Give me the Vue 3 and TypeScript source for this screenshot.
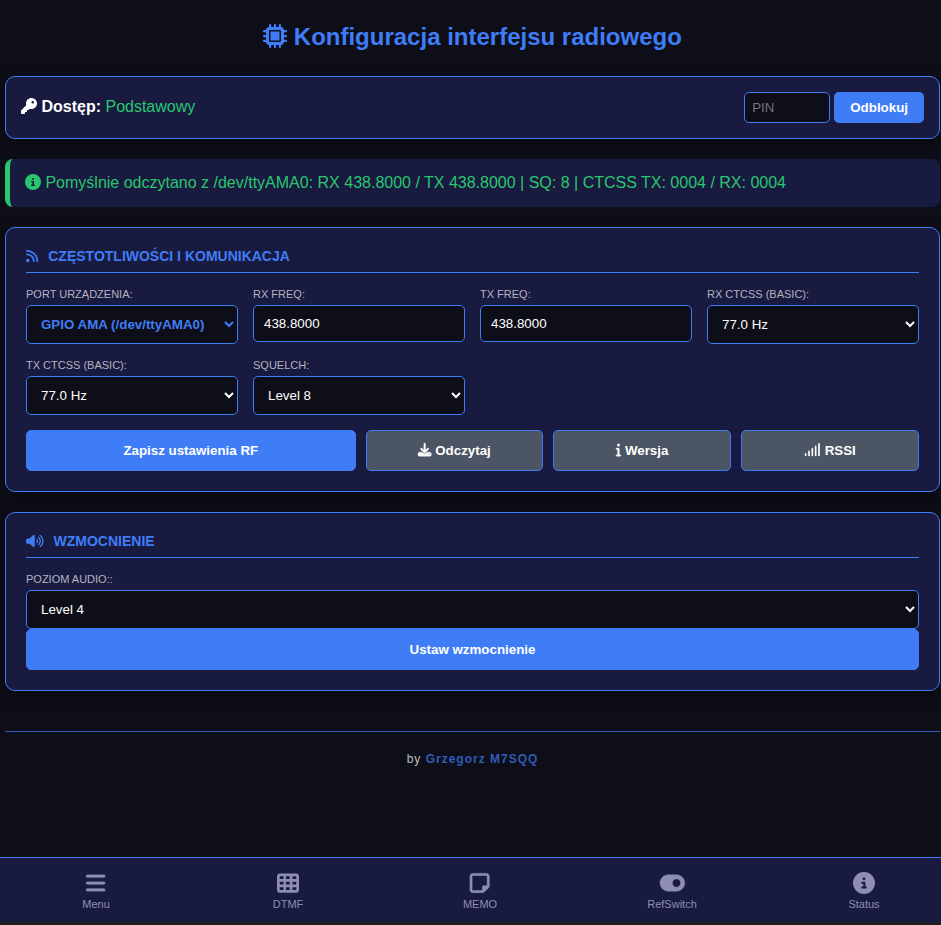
<script setup lang="ts">
import { ref } from 'vue'

type IconName =
  | 'chip' | 'key' | 'infoCircle' | 'rss' | 'volume' | 'download'
  | 'info' | 'signal' | 'bars' | 'cells' | 'note' | 'toggle'

interface Icon {
  width: number
  path: string
}

interface NavItem {
  label: string
  icon: IconName
  stroke: number
}

const icons: Record<IconName, Icon> = {
  chip: {
    width: 512,
    path: 'M176 24c0-13.3-10.7-24-24-24s-24 10.7-24 24V64c-35.3 0-64 28.7-64 64H24c-13.3 0-24 10.7-24 24s10.7 24 24 24H64v56H24c-13.3 0-24 10.7-24 24s10.7 24 24 24H64v56H24c-13.3 0-24 10.7-24 24s10.7 24 24 24H64c0 35.3 28.7 64 64 64v40c0 13.3 10.7 24 24 24s24-10.7 24-24V448h56v40c0 13.3 10.7 24 24 24s24-10.7 24-24V448h56v40c0 13.3 10.7 24 24 24s24-10.7 24-24V448c35.3 0 64-28.7 64-64h40c13.3 0 24-10.7 24-24s-10.7-24-24-24H448V280h40c13.3 0 24-10.7 24-24s-10.7-24-24-24H448V176h40c13.3 0 24-10.7 24-24s-10.7-24-24-24H448c0-35.3-28.7-64-64-64V24c0-13.3-10.7-24-24-24s-24 10.7-24 24V64H280V24c0-13.3-10.7-24-24-24s-24 10.7-24 24V64H176V24zM160 128H352c17.7 0 32 14.3 32 32V352c0 17.7-14.3 32-32 32H160c-17.7 0-32-14.3-32-32V160c0-17.7 14.3-32 32-32zm192 32H160V352H352V160z',
  },
  key: {
    width: 512,
    path: 'M336 352c97.2 0 176-78.8 176-176S433.2 0 336 0S160 78.8 160 176c0 18.7 2.9 36.8 8.3 53.7L7 391c-4.5 4.5-7 10.6-7 17v80c0 13.3 10.7 24 24 24h80c13.3 0 24-10.7 24-24V448h40c13.3 0 24-10.7 24-24V384h40c6.4 0 12.5-2.5 17-7l33.3-33.3c16.9 5.4 35 8.3 53.7 8.3zM376 96a40 40 0 1 1 0 80 40 40 0 1 1 0-80z',
  },
  infoCircle: {
    width: 512,
    path: 'M256 512A256 256 0 1 0 256 0a256 256 0 1 0 0 512zM216 336h24V272H216c-13.3 0-24-10.7-24-24s10.7-24 24-24h48c13.3 0 24 10.7 24 24v88h8c13.3 0 24 10.7 24 24s-10.7 24-24 24H216c-13.3 0-24-10.7-24-24s10.7-24 24-24zm40-208a32 32 0 1 1 0 64 32 32 0 1 1 0-64z',
  },
  rss: {
    width: 448,
    path: 'M0 64C0 46.3 14.3 32 32 32c229.8 0 416 186.2 416 416c0 17.7-14.3 32-32 32s-32-14.3-32-32C384 253.6 226.4 96 32 96C14.3 96 0 81.7 0 64zM0 416a64 64 0 1 1 128 0A64 64 0 1 1 0 416zM32 160c159.1 0 288 128.9 288 288c0 17.7-14.3 32-32 32s-32-14.3-32-32c0-123.7-100.3-224-224-224c-17.7 0-32-14.3-32-32s14.3-32 32-32z',
  },
  volume: {
    width: 640,
    path: 'M533.6 32.5C598.5 85.2 640 165.8 640 256s-41.5 170.7-106.4 223.5c-10.3 8.4-25.4 6.8-33.8-3.5s-6.8-25.4 3.5-33.8C557.5 398.2 592 331.2 592 256s-34.5-142.2-88.7-186.3c-10.3-8.4-11.8-23.5-3.5-33.8s23.5-11.8 33.8-3.5zM473.1 107c43.2 35.2 70.9 88.9 70.9 149s-27.7 113.8-70.9 149c-10.3 8.4-25.4 6.8-33.8-3.5s-6.8-25.4 3.5-33.8C475.3 341.3 496 301.1 496 256s-20.7-85.3-53.2-111.8c-10.3-8.4-11.8-23.5-3.5-33.8s23.5-11.8 33.8-3.5zm-60.5 74.5C434.1 199.1 448 225.9 448 256s-13.9 56.9-35.4 74.5c-10.3 8.4-25.4 6.8-33.8-3.5s-6.8-25.4 3.5-33.8C393.1 284.4 400 271 400 256s-6.9-28.4-17.7-37.3c-10.3-8.4-11.8-23.5-3.5-33.8s23.5-11.8 33.8-3.5zM301.1 34.8C312.6 40 320 51.4 320 64V448c0 12.6-7.4 24-18.9 29.2s-25 3.1-34.4-5.3L131.8 352H64c-35.3 0-64-28.7-64-64V224c0-35.3 28.7-64 64-64h67.8L266.7 40.1c9.4-8.4 22.9-10.4 34.4-5.3z',
  },
  download: {
    width: 512,
    path: 'M288 32c0-17.7-14.3-32-32-32s-32 14.3-32 32V274.7l-73.4-73.4c-12.5-12.5-32.8-12.5-45.3 0s-12.5 32.8 0 45.3l128 128c12.5 12.5 32.8 12.5 45.3 0l128-128c12.5-12.5 12.5-32.8 0-45.3s-32.8-12.5-45.3 0L288 274.7V32zM64 352c-35.3 0-64 28.7-64 64v32c0 35.3 28.7 64 64 64H448c35.3 0 64-28.7 64-64V416c0-35.3-28.7-64-64-64H346.5l-45.3 45.3c-25 25-65.5 25-90.5 0L165.5 352H64zm368 56a24 24 0 1 1 0 48 24 24 0 1 1 0-48z',
  },
  info: {
    width: 192,
    path: 'M48 80a48 48 0 1 1 96 0A48 48 0 1 1 48 80zM0 224c0-17.7 14.3-32 32-32H96c17.7 0 32 14.3 32 32V448h32c17.7 0 32 14.3 32 32s-14.3 32-32 32H32c-17.7 0-32-14.3-32-32s14.3-32 32-32H64V256H32c-17.7 0-32-14.3-32-32z',
  },
  signal: {
    width: 640,
    path: 'M576 0c17.7 0 32 14.3 32 32V480c0 17.7-14.3 32-32 32s-32-14.3-32-32V32c0-17.7 14.3-32 32-32zM448 96c17.7 0 32 14.3 32 32V480c0 17.7-14.3 32-32 32s-32-14.3-32-32V128c0-17.7 14.3-32 32-32zM320 192c17.7 0 32 14.3 32 32V480c0 17.7-14.3 32-32 32s-32-14.3-32-32V224c0-17.7 14.3-32 32-32zM192 288c17.7 0 32 14.3 32 32V480c0 17.7-14.3 32-32 32s-32-14.3-32-32V320c0-17.7 14.3-32 32-32zM64 384c17.7 0 32 14.3 32 32v64c0 17.7-14.3 32-32 32s-32-14.3-32-32V416c0-17.7 14.3-32 32-32z',
  },
  bars: {
    width: 448,
    path: 'M0 96C0 78.3 14.3 64 32 64H416c17.7 0 32 14.3 32 32s-14.3 32-32 32H32C14.3 128 0 113.7 0 96zM0 256c0-17.7 14.3-32 32-32H416c17.7 0 32 14.3 32 32s-14.3 32-32 32H32c-17.7 0-32-14.3-32-32zM448 416c0 17.7-14.3 32-32 32H32c-17.7 0-32-14.3-32-32s14.3-32 32-32H416c17.7 0 32 14.3 32 32z',
  },
  cells: {
    width: 512,
    path: 'M64 32C28.7 32 0 60.7 0 96V416c0 35.3 28.7 64 64 64H448c35.3 0 64-28.7 64-64V96c0-35.3-28.7-64-64-64H64zm88 64v64H64V96h88zm56 0h88v64H208V96zm240 0v64H360V96h88zM64 224h88v64H64V224zm232 0v64H208V224h88zm64 0h88v64H360V224zM152 352v64H64V352h88zm56 0h88v64H208V352zm240 0v64H360V352h88z',
  },
  note: {
    width: 448,
    path: 'M64 80c-8.8 0-16 7.2-16 16V416c0 8.8 7.2 16 16 16H288V352c0-17.7 14.3-32 32-32h80V96c0-8.8-7.2-16-16-16H64zM288 480H64c-35.3 0-64-28.7-64-64V96C0 60.7 28.7 32 64 32H384c35.3 0 64 28.7 64 64V320v5.5c0 17-6.7 33.3-18.7 45.3l-90.5 90.5c-12 12-28.3 18.7-45.3 18.7H288z',
  },
  toggle: {
    width: 576,
    path: 'M192 64C86 64 0 150 0 256S86 448 192 448H384c106 0 192-86 192-192s-86-192-192-192H192zm192 96a96 96 0 1 1 0 192 96 96 0 1 1 0-192z',
  },
}

const box = (name: IconName): string => `0 0 ${icons[name].width} 512`

const navItems: NavItem[] = [
  { label: 'Menu', icon: 'bars', stroke: 6 },
  { label: 'DTMF', icon: 'cells', stroke: 0 },
  { label: 'MEMO', icon: 'note', stroke: 14 },
  { label: 'RefSwitch', icon: 'toggle', stroke: 10 },
  { label: 'Status', icon: 'infoCircle', stroke: 0 },
]

const tones: string[] = ['67.0', '71.9', '74.4', '77.0', '79.7', '82.5', '85.4', '88.5']
const levels: number[] = [1, 2, 3, 4, 5, 6, 7, 8]

const pin = ref('')
const port = ref('/dev/ttyAMA0')
const rxFreq = ref('438.8000')
const txFreq = ref('438.8000')
const rxTone = ref('77.0')
const txTone = ref('77.0')
const squelch = ref(8)
const volume = ref(4)
</script>

<template>
  <div class="page">
    <main class="content">
      <h1 class="title">
        <svg class="icon" :viewBox="box('chip')" aria-hidden="true"><path :d="icons.chip.path" /></svg>
        Konfiguracja interfejsu radiowego
      </h1>

      <form class="card access" @submit.prevent>
        <div>
          <svg class="icon" :viewBox="box('key')" aria-hidden="true"><path :d="icons.key.path" /></svg>
          <strong> Dostęp:</strong> <span class="ok">Podstawowy</span>
        </div>
        <div class="unlock">
          <input v-model="pin" class="pin" type="password" placeholder="PIN" aria-label="PIN" />
          <button class="unlock-button" type="submit">Odblokuj</button>
        </div>
      </form>

      <div class="notice" role="status">
        <svg class="icon" :viewBox="box('infoCircle')" aria-hidden="true"><path :d="icons.infoCircle.path" /></svg>
        Pomyślnie odczytano z /dev/ttyAMA0: RX 438.8000 / TX 438.8000 | SQ: 8 | CTCSS TX: 0004 / RX: 0004
      </div>

      <form class="card section" @submit.prevent>
        <h2 class="heading">
          <svg class="icon" :viewBox="box('rss')" aria-hidden="true"><path :d="icons.rss.path" /></svg>
          Częstotliwości i komunikacja
        </h2>
        <div class="fields">
          <div class="field">
            <label for="port">Port urządzenia:</label>
            <select id="port" v-model="port" class="control port">
              <option value="/dev/ttyAMA0">GPIO AMA (/dev/ttyAMA0)</option>
            </select>
          </div>
          <div class="field">
            <label for="rx-freq">RX Freq:</label>
            <input id="rx-freq" v-model="rxFreq" class="control" type="text" />
          </div>
          <div class="field">
            <label for="tx-freq">TX Freq:</label>
            <input id="tx-freq" v-model="txFreq" class="control" type="text" />
          </div>
          <div class="field">
            <label for="rx-tone">RX CTCSS (Basic):</label>
            <select id="rx-tone" v-model="rxTone" class="control">
              <option v-for="tone in tones" :key="tone" :value="tone">{{ tone }} Hz</option>
            </select>
          </div>
          <div class="field">
            <label for="tx-tone">TX CTCSS (Basic):</label>
            <select id="tx-tone" v-model="txTone" class="control">
              <option v-for="tone in tones" :key="tone" :value="tone">{{ tone }} Hz</option>
            </select>
          </div>
          <div class="field">
            <label for="squelch">Squelch:</label>
            <select id="squelch" v-model="squelch" class="control">
              <option v-for="level in levels" :key="level" :value="level">Level {{ level }}</option>
            </select>
          </div>
        </div>
        <div class="actions">
          <button class="button save" type="submit">Zapisz ustawienia RF</button>
          <button class="button secondary" type="button">
            <svg class="icon heavy" :viewBox="box('download')" aria-hidden="true"><path :d="icons.download.path" /></svg>
            Odczytaj
          </button>
          <button class="button secondary" type="button">
            <svg class="icon heavy" :viewBox="box('info')" aria-hidden="true"><path :d="icons.info.path" /></svg>
            Wersja
          </button>
          <button class="button secondary" type="button">
            <svg class="icon" :viewBox="box('signal')" aria-hidden="true"><path :d="icons.signal.path" /></svg>
            RSSI
          </button>
        </div>
      </form>

      <form class="card section" @submit.prevent>
        <h2 class="heading">
          <svg class="icon" :viewBox="box('volume')" aria-hidden="true"><path :d="icons.volume.path" /></svg>
          Wzmocnienie
        </h2>
        <div class="field">
          <label for="volume">Poziom audio::</label>
          <select id="volume" v-model="volume" class="control">
            <option v-for="level in levels" :key="level" :value="level">Level {{ level }}</option>
          </select>
        </div>
        <button class="button wide" type="submit">Ustaw wzmocnienie</button>
      </form>

      <footer class="footer">by <strong class="author">Grzegorz M7SQQ</strong></footer>
    </main>

    <nav class="nav" aria-label="Nawigacja">
      <a v-for="item in navItems" :key="item.label" class="nav-item" href="#">
        <svg class="icon nav-icon" :viewBox="box(item.icon)" :stroke-width="item.stroke" aria-hidden="true">
          <path :d="icons[item.icon].path" />
        </svg>
        <span>{{ item.label }}</span>
      </a>
    </nav>
  </div>
</template>

<style>
body {
  background: #0e0e18;
}
</style>

<style scoped>
.page,
.page * {
  box-sizing: border-box;
}

.page {
  --bg: #0e0e18;
  --panel: #191a3f;
  --accent: #3f7df6;
  --green: #28c76f;
  display: flex;
  flex-direction: column;
  min-height: 100vh;
  overflow-x: clip;
  background: var(--bg);
  color: #fff;
  font-family: "Liberation Sans", Arial, sans-serif;
  font-size: 16px;
  line-height: 18px;
}

.icon {
  height: 1em;
  width: auto;
  overflow: visible;
  fill: currentColor;
  vertical-align: -0.125em;
}

.heavy {
  stroke: currentColor;
  stroke-width: 14;
}

.content {
  padding: 23px 1px 20px 5px;
}

.title {
  margin: 0 0 25px;
  color: var(--accent);
  font-size: 24px;
  line-height: 28px;
  text-align: center;
}

.card {
  margin-bottom: 20px;
  border: 1px solid var(--accent);
  border-radius: 10px;
  background: var(--panel);
  box-shadow: 0 4px 15px rgba(0, 0, 0, 0.5);
}

.access {
  display: flex;
  align-items: baseline;
  justify-content: space-between;
  padding: 15px;
}

.ok {
  color: var(--green);
}

.unlock {
  display: flex;
  gap: 4px;
}

input,
select,
button {
  margin: 0;
  font-family: inherit;
}

.pin {
  width: 86px;
  padding: 7px;
  border: 1px solid var(--accent);
  border-radius: 5px;
  background: var(--bg);
  color: #fff;
}

.unlock-button {
  padding: 8px 16px;
  border: 0;
  border-radius: 5px;
  background: var(--accent);
  color: #fff;
  font-weight: bold;
}

.notice {
  margin-bottom: 20px;
  padding: 15px;
  border-left: 5px solid var(--green);
  border-radius: 8px;
  background: var(--panel);
  color: var(--green);
}

.section {
  padding: 20px;
}

.heading {
  display: flex;
  align-items: center;
  gap: 10px;
  margin: 0 0 15px;
  padding-bottom: 8px;
  border-bottom: 1px solid var(--accent);
  color: var(--accent);
  font-size: 14px;
  line-height: 16px;
  text-transform: uppercase;
}

.fields {
  display: grid;
  grid-template-columns: repeat(auto-fill, minmax(200px, 1fr));
  align-items: start;
  gap: 15px;
  margin-bottom: 15px;
}

.field {
  display: flex;
  flex-direction: column;
  gap: 4px;
}

.field label {
  color: #b4b4c0;
  font-size: 11px;
  line-height: 13px;
  text-transform: uppercase;
}

.control {
  width: 100%;
  padding: 10px;
  border: 1px solid var(--accent);
  border-radius: 5px;
  background: var(--bg);
  color: #fff;
}

.port {
  color: var(--accent);
  font-weight: bold;
}

.actions {
  display: flex;
  gap: 10px;
}

.button {
  flex: 1 1 0;
  padding: 12px;
  border: 1px solid var(--accent);
  border-radius: 5px;
  background: var(--accent);
  color: #fff;
  font-weight: bold;
}

.save {
  flex-grow: 2;
}

.secondary {
  background: #4b5563;
}

.wide {
  display: block;
  width: 100%;
}

.footer {
  margin-top: 40px;
  padding: 20px 0;
  border-top: 1px solid var(--accent);
  color: #fff;
  font-size: 12px;
  line-height: 14px;
  letter-spacing: 1px;
  text-align: center;
  opacity: 0.7;
}

.author {
  color: var(--accent);
}

.nav {
  position: sticky;
  bottom: 0;
  display: flex;
  margin-top: auto;
  overflow: hidden;
  border-top: 1px solid var(--accent);
  border-bottom: 3px solid #1f1f1f;
  background: var(--panel);
}

.nav-item {
  display: flex;
  flex: 1 0 192px;
  flex-direction: column;
  align-items: center;
  gap: 4px;
  padding: 14px 0 11px;
  color: #8e8eb2;
  font-size: 11px;
  line-height: 13px;
  text-decoration: none;
}

.nav-icon {
  height: 22px;
  stroke: currentColor;
}
</style>
